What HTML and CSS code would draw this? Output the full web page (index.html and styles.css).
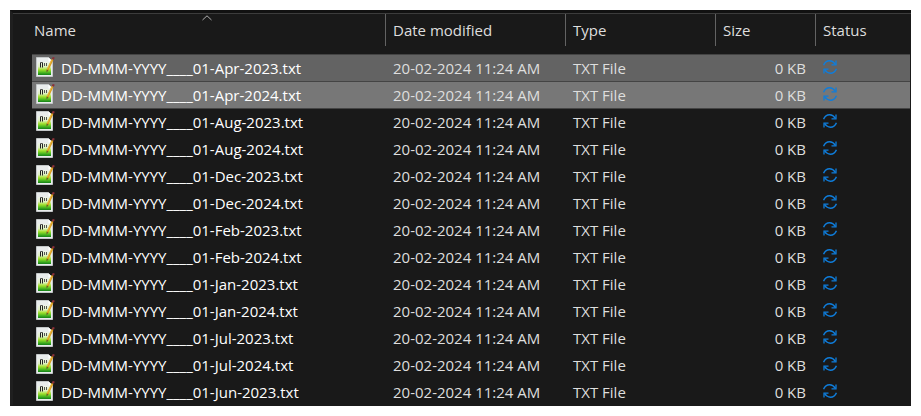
FILE: index.html
```html
<!DOCTYPE html>
<html lang="en">
<head>
    <meta charset="UTF-8">
    <meta name="viewport" content="width=device-width, initial-scale=1.0">
    <title>Files</title>
    <link rel="stylesheet" href="styles.css">
</head>
<body>
    <svg class="defs" aria-hidden="true">
        <defs>
            <linearGradient id="green" x1="0" y1="0" x2="0" y2="1">
                <stop offset="0" stop-color="#eef3ea"/>
                <stop offset="0.35" stop-color="#dff0c0"/>
                <stop offset="0.6" stop-color="#9fe02c"/>
                <stop offset="0.8" stop-color="#4fba22"/>
                <stop offset="1" stop-color="#128018"/>
            </linearGradient>
        </defs>
        <symbol id="note" viewBox="0 0 19 20">
            <path d="M0.5 0.5h12l4 4v15h-16z" fill="#e9ecec" stroke="#c3c7c8"/>
            <path d="M2 5h13v13H2z" fill="url(#green)"/>
            <path d="M12.5 0.5v4h4z" fill="#fff"/>
            <path d="M4.500 10.500v-5M6.500 5.500v5" stroke="#222" fill="none"/>
            <path d="M4.500 5.500h2" stroke="#555"/>
            <path d="M8.500 6v3M10.500 6v3" stroke="#555"/>
            <path d="M16.500 2.500L11.500 13" stroke="#d99a1c" stroke-width="2"/>
            <path d="M16 2.500l-4.500 9.500" stroke="#f3cb55" stroke-width="0.600"/>
            <path d="M17.800 0.300l-1 2" stroke="#8a3038" stroke-width="2.200"/>
            <path d="M10.500 12.500l2 1-2 2z" fill="#6d5a2a"/>
        </symbol>
        <symbol id="sync" viewBox="0 0 14 14">
            <path d="M0.600 5.200C1.800 2.200 4 0.800 6.600 0.800c2.400 0 4.300 1.300 5.800 3.500M13.400 8.800C12.200 11.800 10 13.200 7.400 13.200c-2.400 0-4.300-1.300-5.800-3.500" fill="none" stroke="#0f7ddb" stroke-width="1.400"/>
            <path d="M13 0.500v4.300H8.500M1 13.500V9.200H5.500" fill="none" stroke="#0f7ddb" stroke-width="1.300"/>
        </symbol>
    </svg>

    <div class="panel">
        <table class="files">
            <colgroup>
                <col class="c-name">
                <col class="c-date">
                <col class="c-type">
                <col class="c-size">
                <col>
            </colgroup>
            <thead>
                <tr>
                    <th class="first"><div>Name</div><svg class="sort" viewBox="0 0 10 6"><path d="M0.500 5L5 0.800 9.500 5" fill="none" stroke="#b0b0b0"/></svg></th>
                    <th><div>Date modified</div></th>
                    <th><div>Type</div></th>
                    <th><div>Size</div></th>
                    <th class="last"><div>Status</div></th>
                </tr>
            </thead>
            <tbody id="rows"></tbody>
        </table>
    </div>

    <script src="script.js"></script>
</body>
</html>
```
FILE: styles.css
```css
*{
    box-sizing: border-box;
}
body{
    margin: 0;
    padding: 10px;
    background-color: #fff;
    font-family: "Open Sans", "Noto Sans", sans-serif;
    font-size: 15px;
    line-height: 20px;
}
.defs{
    position: absolute;
    width: 0;
    height: 0;
}
.panel{
    background-color: #191919;
    border-top: 3px solid #111;
    border-left: 3px solid #1f1f1f;
    border-bottom: 1px solid #191919;
}
.files{
    width: 100%;
    table-layout: fixed;
    border-collapse: separate;
    border-spacing: 0;
    border-top: 1px solid #3c3c3c;
    padding-left: 19px;
    padding-right: 1px;
    color: #dedede;
}
.c-name{
    width: 354px;
}
.c-date{
    width: 180px;
}
.c-type{
    width: 150px;
}
.c-size{
    width: 100px;
}
th{
    position: relative;
    padding: 0 0 8px;
    font-weight: normal;
    text-align: left;
}
th div{
    height: 32px;
    padding: 6px 0 0 7px;
    border-right: 1px solid #636363;
}
th.first div{
    padding-left: 2px;
}
th.last div{
    border-right: none;
}
.sort{
    position: absolute;
    top: 1px;
    left: 170px;
    width: 10px;
    height: 6px;
}
td{
    height: 27px;
    padding: 0 0 0 7px;
    border-top: 1px solid transparent;
    white-space: nowrap;
}
td.name{
    padding-left: 4px;
    color: #fff;
}
td.size{
    padding-right: 10px;
    text-align: right;
}
.file{
    display: flex;
    align-items: center;
    gap: 6px;
}
.note{
    width: 19px;
    height: 20px;
    margin-bottom: 2px;
}
.sync{
    display: block;
    width: 14px;
    height: 14px;
    margin-bottom: 2px;
}
.selected td{
    background-color: #636363;
    border-top-color: #444;
}
.focused td{
    background-color: #777;
    border-top-color: #444;
}
.focused + tr td{
    border-top-color: #444;
}
```
FILE: script.js
```js
const names = [
    "01-Apr-2023", "01-Apr-2024", "01-Aug-2023", "01-Aug-2024",
    "01-Dec-2023", "01-Dec-2024", "01-Feb-2023", "01-Feb-2024",
    "01-Jan-2023", "01-Jan-2024", "01-Jul-2023", "01-Jul-2024",
    "01-Jun-2023"
];
const states = ["selected", "focused"];

document.getElementById("rows").innerHTML = names.map((name, i) => `
    <tr class="${states[i] || ""}">
        <td class="name"><div class="file"><svg class="note"><use href="#note"/></svg>DD-MMM-YYYY____${name}.txt</div></td>
        <td>20-02-2024 11:24 AM</td>
        <td>TXT File</td>
        <td class="size">0 KB</td>
        <td><svg class="sync" role="img" aria-label="Sync pending"><use href="#sync"/></svg></td>
    </tr>`).join("");
```
